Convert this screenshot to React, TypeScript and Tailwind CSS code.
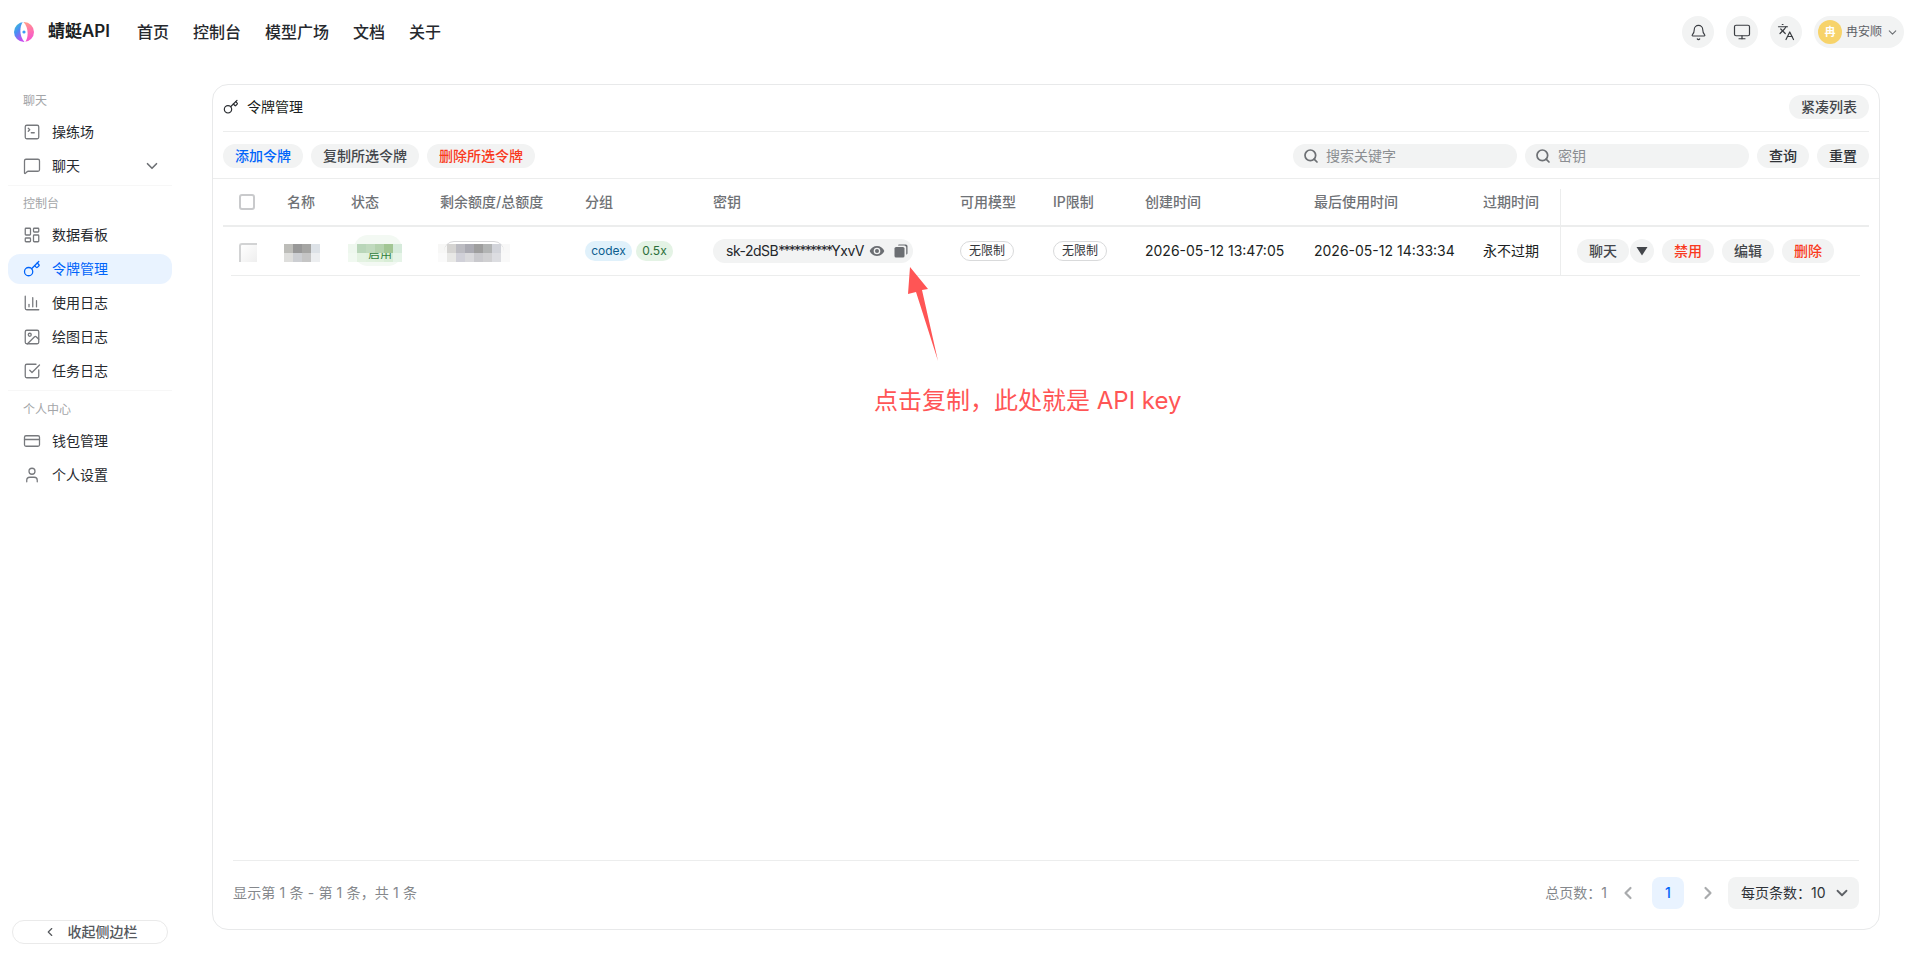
import { Bell, ChartColumn, ChevronDown, ChevronLeft, ChevronRight, CreditCard, Image, Key, Languages, LayoutDashboard, MessageSquare, Monitor, Search, SquareCheckBig, SquareTerminal, User } from 'lucide-react';
import { clsx } from 'clsx';

const SIDEBAR = [
    {
        title: '聊天',
        gap: 'border-b border-[#f7f7f7] pb-[4px] mb-[8px]',
        items: [
            { name: '操练场', icon: SquareTerminal },
            { name: '聊天', icon: MessageSquare, more: true },
        ],
    },
    {
        title: '控制台',
        gap: 'border-b border-[#f7f7f7] pb-[4px] mb-[9px]',
        items: [
            { name: '数据看板', icon: LayoutDashboard },
            { name: '令牌管理', icon: Key, active: true },
            { name: '使用日志', icon: ChartColumn },
            { name: '绘图日志', icon: Image },
            { name: '任务日志', icon: SquareCheckBig },
        ],
    },
    {
        title: '个人中心',
        gap: '',
        items: [
            { name: '钱包管理', icon: CreditCard },
            { name: '个人设置', icon: User },
        ],
    },
];

const NAV = ['首页', '控制台', '模型广场', '文档', '关于'];
const HEAD = ['名称', '状态', '剩余额度/总额度', '分组', '密钥', '可用模型', 'IP限制', '创建时间', '最后使用时间', '过期时间'];
const COLS = 'grid grid-cols-[48px_64px_89px_145px_128px_247px_93px_92px_169px_169px_77px_1fr]';

const NAME_BLUR = [
    'bg-[#bdbdb9]', 'bg-[#989898]', 'bg-[#a5a5a3]', 'bg-[#dde2e7]',
    'bg-[#dededc]', 'bg-[#ccced2]', 'bg-[#c5c5c5]', 'bg-[#eceef0]',
];
const STATUS_BLUR = [
    'bg-[#eef7ee]', 'bg-[#b9d6b9]', 'bg-[#c0dabe]', 'bg-[#b4d2ae]', 'bg-[#a2c694]', 'bg-[#d6ebdb]',
    'bg-[#f1f9f1]', 'bg-[#e3f2e1]', 'bg-[#e0f1de]', 'bg-[#dff0dc]', 'bg-[#d8edd6]', 'bg-[#e6f4e8]',
];
const QUOTA_BLUR = [
    'bg-[#f7f7f6]', 'bg-[#d5d4d2]', 'bg-[#bcbcc2]', 'bg-[#ababb3]', 'bg-[#9e9e9e]', 'bg-[#b2b4b4]', 'bg-[#d2d4da]', 'bg-[#f8f8f8]',
    'bg-[#fafafa]', 'bg-[#e8e8e6]', 'bg-[#d0d0d8]', 'bg-[#d9d9dc]', 'bg-[#c9c9cd]', 'bg-[#d0d0d2]', 'bg-[#dcdde1]', 'bg-[#f9f9f9]',
];

function Logo() {
    return (
        <svg width="20" height="20" viewBox="0 0 20 20" className="shrink-0">
            <defs>
                <linearGradient id="logoLeft" x1="0" y1="0" x2="0.6" y2="1">
                    <stop offset="0" stopColor="#34d3c8" />
                    <stop offset="0.5" stopColor="#4a8cf5" />
                    <stop offset="1" stopColor="#c44cf0" />
                </linearGradient>
                <linearGradient id="logoRight" x1="0.4" y1="0" x2="0.6" y2="1">
                    <stop offset="0" stopColor="#ff9a8a" />
                    <stop offset="0.5" stopColor="#ff6fb0" />
                    <stop offset="1" stopColor="#f050d8" />
                </linearGradient>
            </defs>
            <path d="M10 0a10 10 0 0 0 0 20Z" fill="url(#logoLeft)" />
            <path d="M10 0a10 10 0 0 1 0 20Z" fill="url(#logoRight)" />
            <path d="M9 -0.5C5.2 5 5.2 15 11 20.5C14.8 15 14.8 5 9 -0.5Z" fill="#ffffff" />
            <circle cx="10" cy="10" r="1.6" fill="#3d9df5" />
        </svg>
    );
}

function Blur({ cells, cols }: { cells: string[]; cols: string }) {
    return (
        <div className={clsx('grid auto-rows-[9px]', cols)}>
            {cells.map((c, i) => (
                <div key={i} className={c} />
            ))}
        </div>
    );
}

function GrayBtn({ children, className }: { children: React.ReactNode; className?: string }) {
    return (
        <button className={clsx('h-6 rounded-xl bg-[#f2f3f3] text-sm font-medium flex items-center justify-center', className)}>
            {children}
        </button>
    );
}

function CircleBtn({ children }: { children: React.ReactNode }) {
    return <button className="w-8 h-8 rounded-full bg-[#f2f3f3] flex items-center justify-center text-[#3a3d42]">{children}</button>;
}

function SearchBox({ text }: { text: string }) {
    return (
        <div className="w-[224px] h-6 rounded-xl bg-[#f2f3f3] flex items-center pl-[10px] gap-[7px]">
            <Search className="w-4 h-4 text-[#6d7074]" strokeWidth={2.6} />
            <span className="text-sm text-[#8b8e92]">{text}</span>
        </div>
    );
}

export default function App() {
    return (
        <div className="relative h-screen flex flex-col bg-white text-[#1c1f23] overflow-hidden font-['Inter','Noto_Sans_CJK_SC',sans-serif]">
            {/* Top bar */}
            <header className="h-16 shrink-0 flex items-center pl-[14px] pr-2">
                <Logo />
                <span className="ml-[14px] text-[17px] font-semibold">蜻蜓API</span>
                <nav className="ml-[27px] flex items-center gap-6">
                    {NAV.map((n) => (
                        <span key={n} className="text-base font-medium text-[#26292e]">{n}</span>
                    ))}
                </nav>
                <div className="ml-auto flex items-center gap-3">
                    <CircleBtn><Bell className="w-[17px] h-[17px]" strokeWidth={1.6} /></CircleBtn>
                    <CircleBtn><Monitor className="w-[18px] h-[18px]" strokeWidth={1.6} /></CircleBtn>
                    <CircleBtn><Languages className="w-[18px] h-[18px]" strokeWidth={1.6} /></CircleBtn>
                    <div className="w-[90px] h-8 rounded-full bg-[#f2f3f3] flex items-center pl-1">
                        <span className="w-6 h-6 rounded-full bg-[#f7d36a] text-white text-[11px] font-semibold flex items-center justify-center">冉</span>
                        <span className="ml-1 text-xs text-[#5e6166]">冉安顺</span>
                        <ChevronDown className="ml-1 w-[13px] h-[13px] text-[#6d7074]" />
                    </div>
                </div>
            </header>

            <div className="flex-1 min-h-0 flex">
                {/* Sidebar */}
                <aside className="w-[180px] shrink-0 flex flex-col pt-[27px]">
                    {SIDEBAR.map((group) => (
                        <div key={group.title} className={clsx(group.gap, 'mx-2')}>
                            <div className="h-5 pl-[15px] text-xs leading-5 text-[#a3a5a8] mb-[6px]">{group.title}</div>
                            <div className="flex flex-col gap-1">
                                {group.items.map((it) => (
                                    <div
                                        key={it.name}
                                        className={clsx(
                                            'h-[30px] rounded-xl flex items-center pl-[15px] pr-[11px] gap-[11px] text-sm',
                                            it.active ? 'bg-[#e9f3ff] text-[#0064fa]' : 'text-[#26292e]'
                                        )}
                                    >
                                        <it.icon className={clsx('w-[18px] h-[18px] shrink-0', it.active ? 'text-[#0064fa]' : 'text-[#77797d]')} strokeWidth={1.7} />
                                        <span>{it.name}</span>
                                        {it.more && <ChevronDown className="ml-auto w-[18px] h-[18px] text-[#6d7074]" strokeWidth={2.2} />}
                                    </div>
                                ))}
                            </div>
                        </div>
                    ))}
                    <button className="mt-auto mb-3 mx-3 h-6 rounded-xl border border-[#eaeaea] flex items-center justify-center gap-[11px] text-sm font-medium text-[#55585c]">
                        <ChevronLeft className="w-[14px] h-[14px]" strokeWidth={2} />
                        收起侧边栏
                    </button>
                </aside>

                {/* Token panel */}
                <main className="flex-1 min-w-0 pl-8 pr-8 pt-5 pb-[26px]">
                    <div className="h-full rounded-2xl border border-[#e8e9ea] flex flex-col">
                        <div className="px-[10px] pt-[10px]">
                            <div className="flex items-center justify-between pb-3 border-b border-[#eceded]">
                                <div className="flex items-center gap-2 h-6">
                                    <Key className="w-[16px] h-[16px] text-[#2c2f33]" strokeWidth={1.8} />
                                    <span className="text-sm">令牌管理</span>
                                </div>
                                <GrayBtn className="w-20 text-[#43464b]">紧凑列表</GrayBtn>
                            </div>
                        </div>

                        <div className="border-b border-[#eceded]">
                            <div className="px-[10px] pt-3 pb-[10px] flex items-center">
                                <div className="flex gap-2">
                                    <GrayBtn className="w-20 text-[#0064fa]">添加令牌</GrayBtn>
                                    <GrayBtn className="w-[108px] text-[#43464b]">复制所选令牌</GrayBtn>
                                    <GrayBtn className="w-[108px] text-[#f93920]">删除所选令牌</GrayBtn>
                                </div>
                                <div className="ml-auto flex gap-2">
                                    <SearchBox text="搜索关键字" />
                                    <SearchBox text="密钥" />
                                    <GrayBtn className="w-[52px] text-[#2f3237]">查询</GrayBtn>
                                    <GrayBtn className="w-[52px] text-[#2f3237]">重置</GrayBtn>
                                </div>
                            </div>
                        </div>

                        {/* Table */}
                        <div className="px-[10px]">
                            <div className={clsx(COLS, 'pl-4 h-12 border-b-2 border-[#eceded] items-center text-sm font-medium text-[#6f7276]')}>
                                <div className="w-4 h-4 rounded-[3px] border-2 border-[#c9cacc]" />
                                {HEAD.map((h) => (
                                    <div key={h}>{h}</div>
                                ))}
                                <div className="self-end h-9 border-l border-[#eceded]" />
                            </div>
                            <div className="mx-2 mr-[9px] border-b border-[#eceded]">
                                <div className={clsx(COLS, 'pl-2 h-12 items-center text-sm')}>
                                    <div className="mt-[2px] w-[18px] h-[19px] rounded-tl-[3px] border-l-2 border-t-2 border-[#d2d3d4] bg-gradient-to-br from-white to-[#eeeeee]" />
                                    <div className="-ml-[3px] mt-1">
                                        <Blur cells={NAME_BLUR} cols="grid-cols-[repeat(4,9px)]" />
                                    </div>
                                    <div className="relative -ml-[3px] mt-1">
                                        <div className="absolute left-[6px] -top-[9px] w-[48px] h-[31px] rounded-[14px] bg-[#f3f9f3]" />
                                        <div className="relative">
                                            <Blur cells={STATUS_BLUR} cols="grid-cols-[repeat(6,9px)]" />
                                        </div>
                                        <div className="absolute left-[20px] top-[9px] h-[6px] overflow-hidden text-xs leading-[4px] text-[#2f7d3b]">启用</div>
                                    </div>
                                    <div className="relative -ml-[2px] mt-1">
                                        <div className="absolute left-[6px] -top-[3px] w-[60px] h-5 rounded-t-[10px] border-t border-[#d6d6d8]" />
                                        <Blur cells={QUOTA_BLUR} cols="grid-cols-[repeat(8,9px)]" />
                                    </div>
                                    <div className="flex gap-1">
                                        <span className="h-5 w-[47px] rounded-full bg-[#e0f1fb] text-[#0b5d8f] text-xs flex items-center justify-center">codex</span>
                                        <span className="h-5 w-[37px] rounded-full bg-[#e4f3e5] text-[#2b6e3a] text-xs flex items-center justify-center">0.5x</span>
                                    </div>
                                    <div className="w-[200px] h-6 rounded-xl bg-[#f2f3f3] flex items-center pl-[13px] text-[#24272b]">
                                        <span className="tracking-[-0.5px] whitespace-nowrap w-[143px]">sk-2dSB<span className="tracking-[-1.7px]">**********</span>YxvV</span>
                                        <svg width="16" height="16" viewBox="0 0 24 24" className="shrink-0 fill-[#6b6e72]">
                                            <path d="M12 4.5C7 4.5 2.7 7.6 1 12c1.7 4.4 6 7.5 11 7.5s9.3-3.1 11-7.5c-1.7-4.4-6-7.5-11-7.5Zm0 12.5a5 5 0 1 1 0-10 5 5 0 0 1 0 10Zm0-8a3 3 0 1 0 0 6 3 3 0 0 0 0-6Z" />
                                        </svg>
                                        <svg width="14" height="14" viewBox="0 0 14 14" className="ml-[9px] shrink-0 fill-[#6b6e72]">
                                            <rect x="0.5" y="3" width="10" height="10.5" rx="1.6" />
                                            <path d="M4 1.6C4 .9 4.6.5 5.2.5h6.6c.9 0 1.7.8 1.7 1.7v7c0 .6-.5 1.3-1.3 1.3V3.6c0-1-.9-2-2-2Z" />
                                        </svg>
                                    </div>
                                    <div><span className="w-[54px] h-5 rounded-full border border-[#d9dadb] text-xs flex items-center justify-center text-[#33363a]">无限制</span></div>
                                    <div><span className="w-[54px] h-5 rounded-full border border-[#d9dadb] text-xs flex items-center justify-center text-[#33363a]">无限制</span></div>
                                    <div className="whitespace-nowrap">2026-05-12 13:47:05</div>
                                    <div className="whitespace-nowrap">2026-05-12 14:33:34</div>
                                    <div className="whitespace-nowrap">永不过期</div>
                                    <div className="h-12 border-l border-[#eceded] flex items-center pl-4">
                                        <GrayBtn className="w-[52px] text-[#43464b]">聊天</GrayBtn>
                                        <GrayBtn className="w-6 ml-[1px]">
                                            <svg width="12" height="10" viewBox="0 0 12 10" className="fill-[#43464b]"><path d="M.5 1h11L6 9.5Z" /></svg>
                                        </GrayBtn>
                                        <GrayBtn className="w-[52px] ml-2 text-[#f93920]">禁用</GrayBtn>
                                        <GrayBtn className="w-[52px] ml-2 text-[#43464b]">编辑</GrayBtn>
                                        <GrayBtn className="w-[52px] ml-2 text-[#f93920]">删除</GrayBtn>
                                    </div>
                                </div>
                            </div>
                        </div>

                        {/* Footer */}
                        <div className="mt-auto mx-5 border-t border-[#eceded] pt-4 pb-5 flex items-center">
                            <span className="text-sm tracking-[0.15px] text-[#85888c]">显示第 1 条 - 第 1 条，共 1 条</span>
                            <div className="ml-auto flex items-center">
                                <span className="text-sm text-[#85888c]">总页数：1</span>
                                <ChevronLeft className="ml-[11px] w-5 h-5 text-[#a9abad]" strokeWidth={2.6} />
                                <span className="ml-[14px] w-8 h-8 rounded-lg bg-[#e9f3ff] text-[#0064fa] text-sm font-medium flex items-center justify-center">1</span>
                                <ChevronRight className="ml-[14px] w-5 h-5 text-[#a9abad]" strokeWidth={2.6} />
                                <div className="ml-[10px] w-[131px] h-8 rounded-lg bg-[#f2f3f3] flex items-center pl-[13px] text-sm text-[#2f3237]">
                                    每页条数：10
                                    <ChevronDown className="ml-auto mr-[8px] w-[18px] h-[18px] text-[#5e6166]" strokeWidth={2.4} />
                                </div>
                            </div>
                        </div>
                    </div>
                </main>
            </div>

            {/* Annotation on top of the screenshot */}
            <svg width="32" height="96" viewBox="908 267 32 96" className="absolute left-[908px] top-[267px]">
                <polygon points="910,267 928,289 922,290 938,361 916,292 908,294" className="fill-[#ff5555]" />
            </svg>
            <div className="absolute left-[874px] top-[385px] text-2xl leading-8 whitespace-nowrap text-[#ff5555]">点击复制，此处就是 API key</div>
        </div>
    );
}
